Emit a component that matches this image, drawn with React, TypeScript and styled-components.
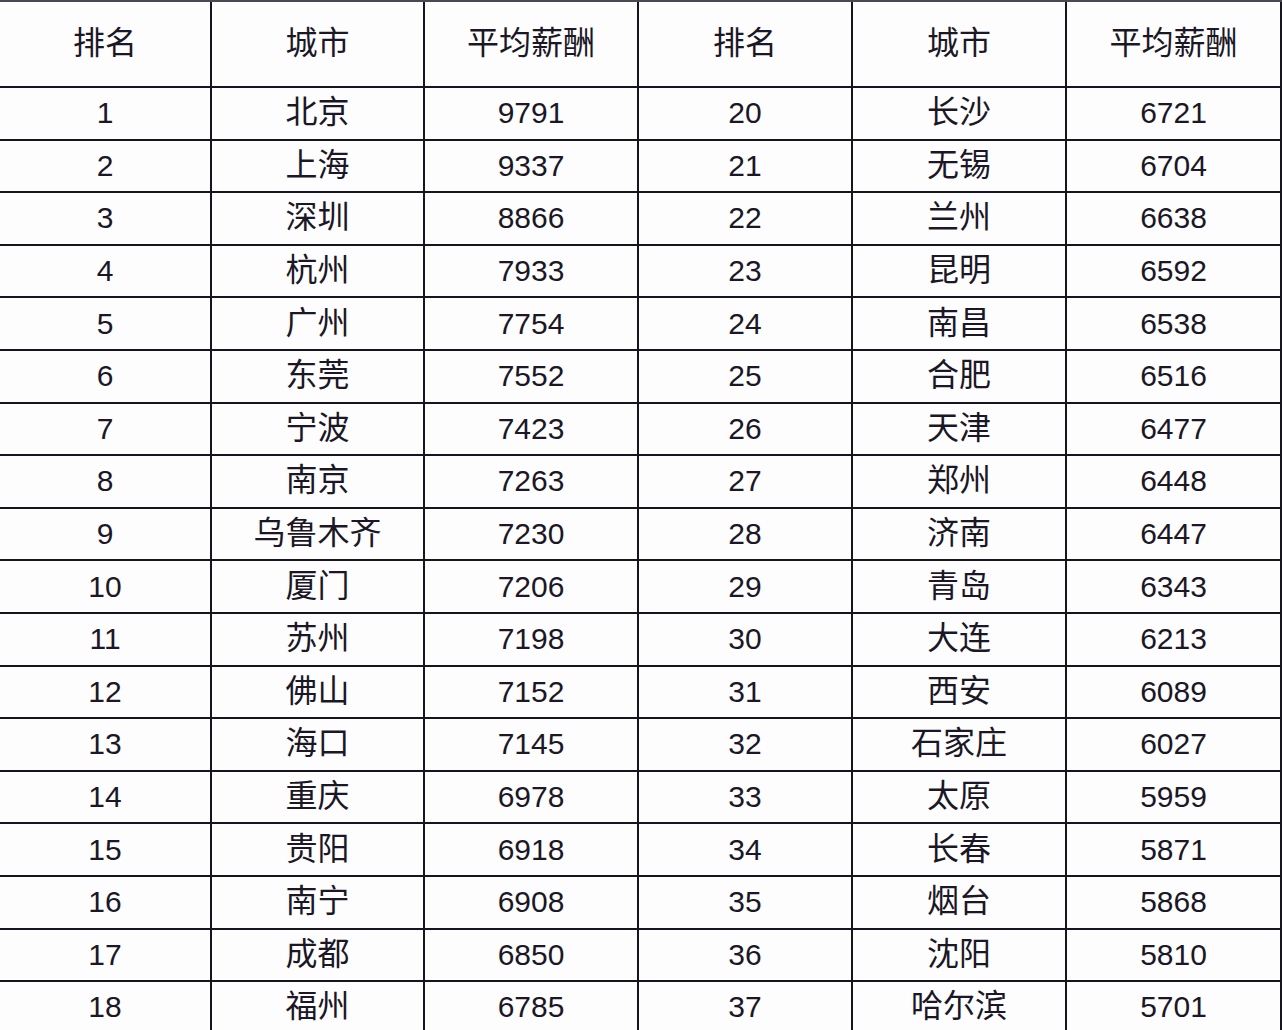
import React from 'react';
import styled, { createGlobalStyle } from 'styled-components';

const GlobalStyle = createGlobalStyle`
  html, body {
    margin: 0;
    padding: 0;
    background: #fdfdfe;
    overflow: hidden;
  }
`;

const Sheet = styled.div`
  width: 1282px;
  height: 1030px;
  overflow: hidden;
  background: #fdfdfe;
  border-top: 2px solid #4a4850;
  box-sizing: border-box;
`;

const Grid = styled.div`
  display: grid;
  grid-template-columns: 212px 213px 214px 214px 214px 215px;
  grid-template-rows: 86px repeat(18, 52.6px);
`;

const Cell = styled.div<{ $cjk?: boolean }>`
  display: flex;
  align-items: center;
  justify-content: center;
  box-sizing: border-box;
  border-right: 2px solid #16141e;
  border-bottom: 2px solid #16141e;
  color: #1b1726;
  font-family: 'Liberation Sans', 'Noto Sans CJK SC', sans-serif;
  font-size: ${(p) => (p.$cjk ? '32px' : '30px')};
  line-height: 1;
  padding-bottom: ${(p) => (p.$cjk ? '2px' : '0')};
  white-space: nowrap;
`;

const left: [number, string, number][] = [
  [1, '北京', 9791],
  [2, '上海', 9337],
  [3, '深圳', 8866],
  [4, '杭州', 7933],
  [5, '广州', 7754],
  [6, '东莞', 7552],
  [7, '宁波', 7423],
  [8, '南京', 7263],
  [9, '乌鲁木齐', 7230],
  [10, '厦门', 7206],
  [11, '苏州', 7198],
  [12, '佛山', 7152],
  [13, '海口', 7145],
  [14, '重庆', 6978],
  [15, '贵阳', 6918],
  [16, '南宁', 6908],
  [17, '成都', 6850],
  [18, '福州', 6785],
];

const right: [number, string, number][] = [
  [20, '长沙', 6721],
  [21, '无锡', 6704],
  [22, '兰州', 6638],
  [23, '昆明', 6592],
  [24, '南昌', 6538],
  [25, '合肥', 6516],
  [26, '天津', 6477],
  [27, '郑州', 6448],
  [28, '济南', 6447],
  [29, '青岛', 6343],
  [30, '大连', 6213],
  [31, '西安', 6089],
  [32, '石家庄', 6027],
  [33, '太原', 5959],
  [34, '长春', 5871],
  [35, '烟台', 5868],
  [36, '沈阳', 5810],
  [37, '哈尔滨', 5701],
];

const headers = ['排名', '城市', '平均薪酬', '排名', '城市', '平均薪酬'];

export default function App() {
  return (
    <>
      <GlobalStyle />
      <Sheet>
        <Grid>
          {headers.map((h, i) => (
            <Cell key={'h' + i} $cjk>
              {h}
            </Cell>
          ))}
          {left.map((row, i) => {
            const r = right[i];
            return (
              <React.Fragment key={row[0]}>
                <Cell>{row[0]}</Cell>
                <Cell $cjk>{row[1]}</Cell>
                <Cell>{row[2]}</Cell>
                <Cell>{r[0]}</Cell>
                <Cell $cjk>{r[1]}</Cell>
                <Cell>{r[2]}</Cell>
              </React.Fragment>
            );
          })}
        </Grid>
      </Sheet>
    </>
  );
}
